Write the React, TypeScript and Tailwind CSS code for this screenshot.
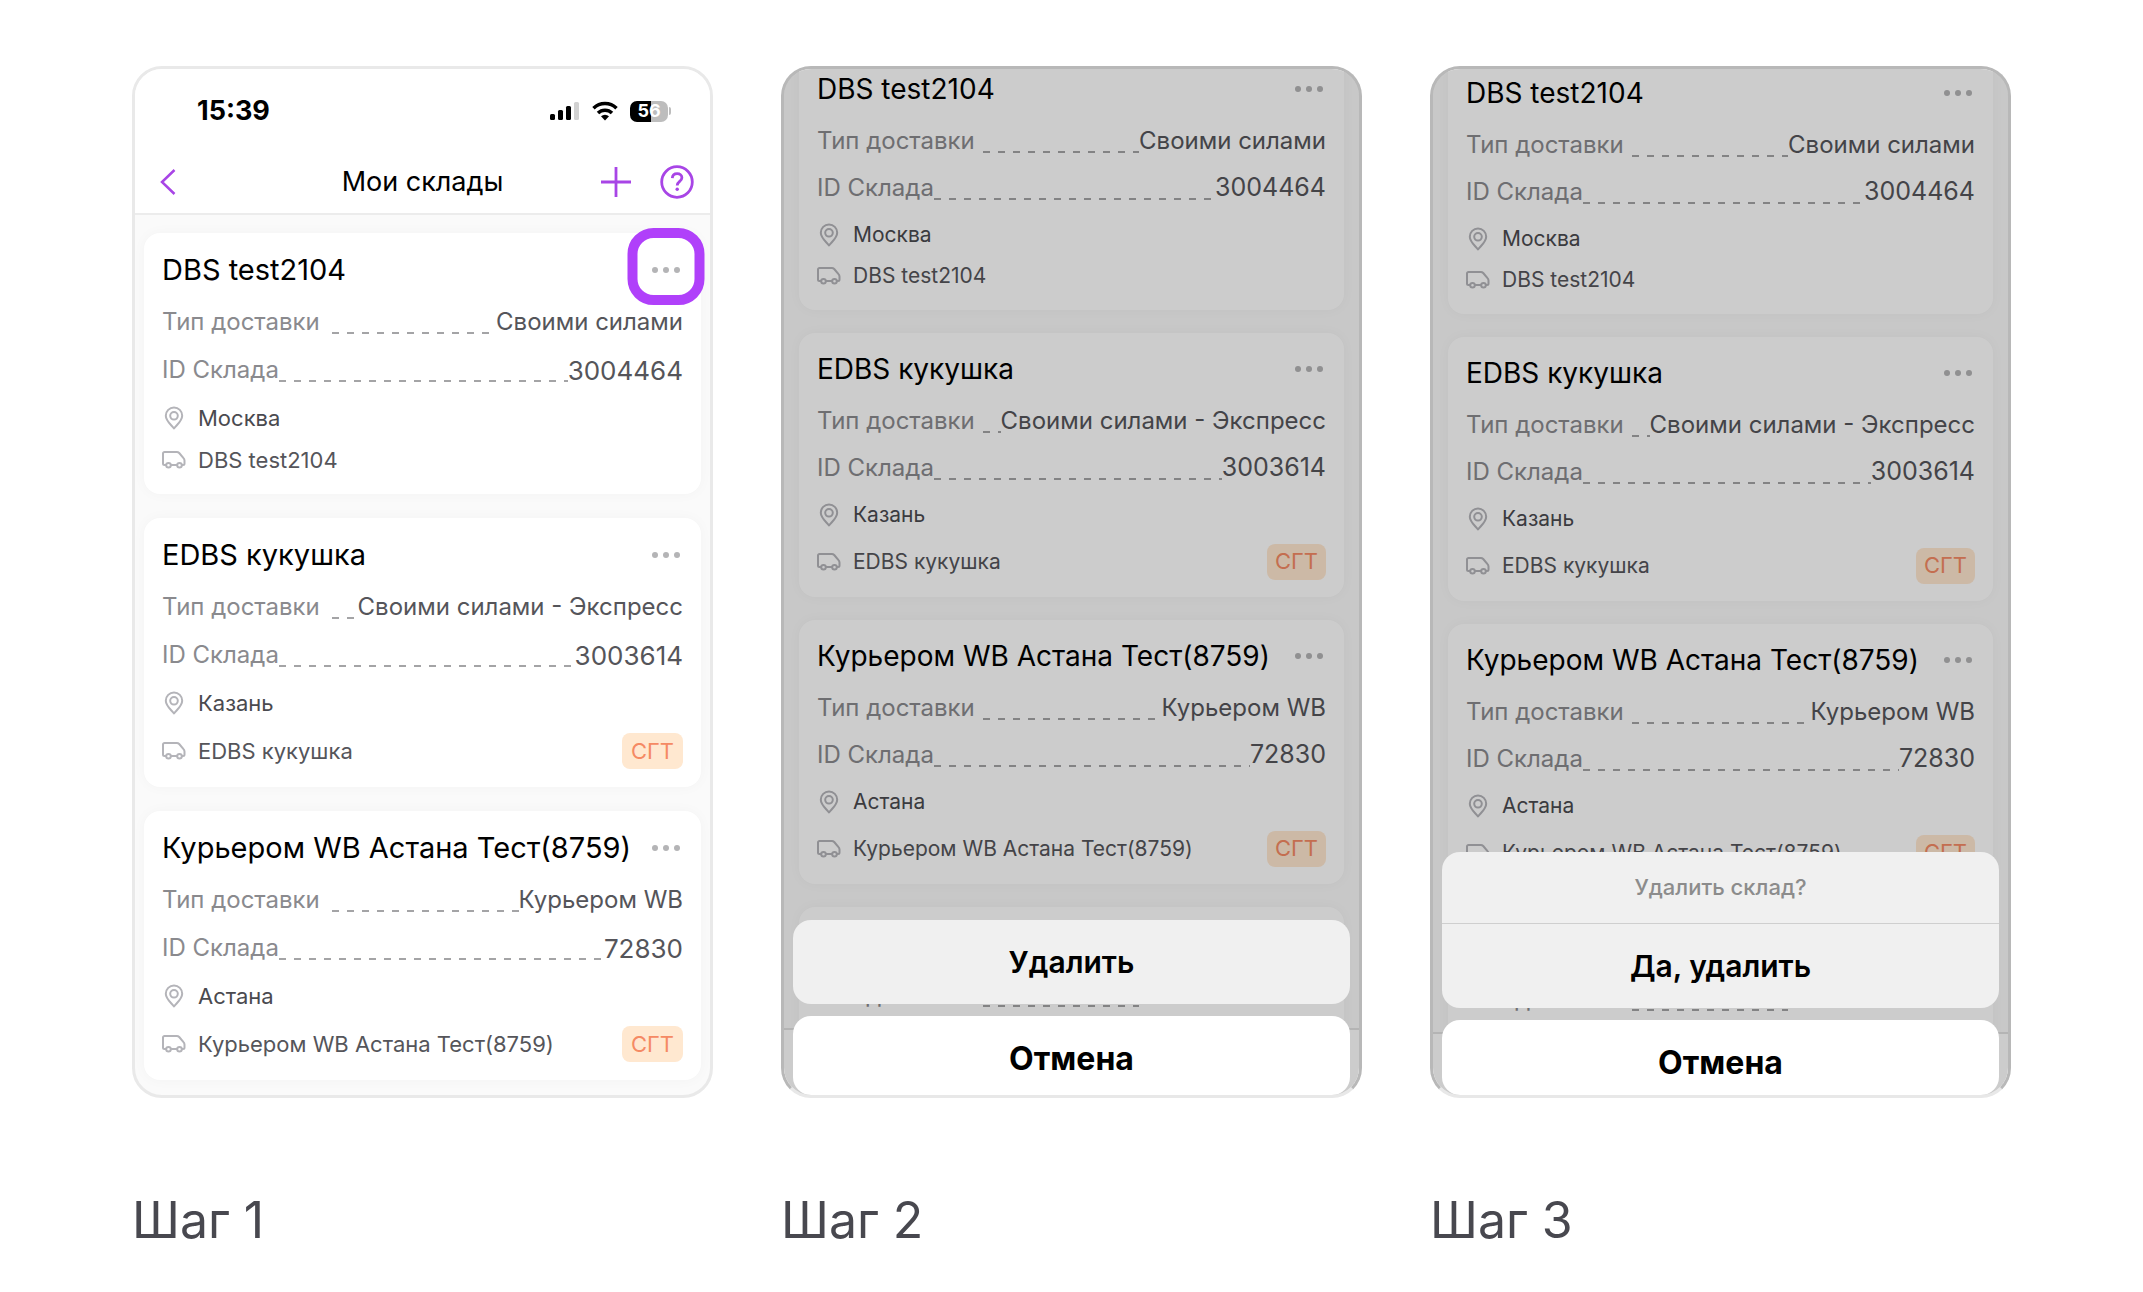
import React from 'react'

interface Warehouse {
	id: string
	name: string
	delivery: string
	city?: string
	oversized?: boolean
}

interface StepProps {
	title: string
	children: React.ReactNode
	dimmed?: boolean
	sheet?: React.ReactNode
}

const warehouses: Warehouse[] = [
	{ id: '3004464', name: 'DBS test2104', delivery: 'Своими силами', city: 'Москва' },
	{ id: '3003614', name: 'EDBS кукушка', delivery: 'Своими силами - Экспресс', city: 'Казань', oversized: true },
	{ id: '72830', name: 'Курьером WB Астана Тест(8759)', delivery: 'Курьером WB', city: 'Астана', oversized: true },
]

// Next card in the scrolled list, mostly hidden behind the action sheet
const nextWarehouse: Warehouse = { id: '3004465', name: 'DBS test', delivery: 'Своими силами' }

const PinIcon = () => (
	<svg viewBox="0 0 24 24" className="size-6 shrink-0" fill="none" stroke="#b4b4b9" strokeWidth="2" aria-hidden="true">
		<path d="M12 22.5C9 18.5 3.8 14.8 3.8 9.7a8.2 8.2 0 0 1 16.4 0c0 5.1-5.2 8.8-8.2 12.8Z" strokeLinejoin="round" />
		<circle cx="12" cy="9.8" r="3.8" />
	</svg>
)

const TruckIcon = () => (
	<svg viewBox="0 0 24 24" className="size-6 shrink-0" fill="none" stroke="#b4b4b9" strokeWidth="2" strokeLinejoin="round" aria-hidden="true">
		<path d="M4 17H2.500A1.500 1.500 0 0 1 1 15.500V5.500A1.500 1.500 0 0 1 2.500 4h12.300c1 0 1.700.3 2.400 1l4.100 4.900c.8.8 1.200 1.600 1.200 2.700V15.500c0 .9-.6 1.500-1.500 1.500H20M9 17h6" />
		<circle cx="6.500" cy="17.300" r="2.300" />
		<circle cx="17.500" cy="17.300" r="2.300" />
	</svg>
)

const StatusBar = () => (
	<div className="flex h-[84px] items-center justify-between pr-[39px] pl-[62px]">
		<span className="text-[27px] font-bold text-black">15:39</span>
		<div className="flex items-center gap-3">
			<svg viewBox="0 0 30 20" className="h-5 w-[30px]" aria-hidden="true">
				<rect x="0" y="13" width="5" height="6" rx="1.500" />
				<rect x="8" y="9" width="5" height="10" rx="1.500" />
				<rect x="16" y="5" width="5" height="14" rx="1.500" />
				<rect x="24" y="1" width="5" height="18" rx="1.500" fill="#d2d2d2" />
			</svg>
			<svg viewBox="0 0 26 20" className="h-5 w-[26px]" fill="none" stroke="#000" strokeWidth="3.500" aria-hidden="true">
				<path d="M1.500 7.200a16.500 16.500 0 0 1 23 0" />
				<path d="M6 12a10 10 0 0 1 14 0" />
				<path d="M13 19.500l-4-4.200a6 6 0 0 1 8 0Z" fill="#000" stroke="none" />
			</svg>
			<div className="flex items-center gap-px">
				<div className="flex h-[21px] w-[38px] items-center justify-center rounded-[7px] bg-linear-to-r from-black from-55% to-[#bdbdbd] to-55% text-[18px] leading-5 font-bold text-white">
					56
				</div>
				<div className="h-2 w-[2px] rounded-r-full bg-[#bdbdbd]" />
			</div>
		</div>
	</div>
)

const NavBar = () => (
	<header className="grid h-[62px] grid-cols-[1fr_auto_1fr] items-center border-b-2 border-[#ececec] px-4 pb-[2px]">
		<button type="button" aria-label="Назад" className="justify-self-start pl-2">
			<svg viewBox="0 0 18 28" className="h-7 w-[18px]" fill="none" stroke="#a845e6" strokeWidth="2.500" aria-hidden="true">
				<path d="M15.500 2 3 14l12.500 12" />
			</svg>
		</button>
		<h1 className="text-[27px] leading-8 text-black">Мои склады</h1>
		<div className="flex items-center gap-7 justify-self-end">
			<button type="button" aria-label="Добавить склад">
				<svg viewBox="0 0 32 32" className="size-8" fill="none" stroke="#a845e6" strokeWidth="2.800" aria-hidden="true">
					<path d="M16 1v30M1 16h30" />
				</svg>
			</button>
			<button type="button" aria-label="Помощь">
				<svg viewBox="0 0 34 34" className="size-[34px]" fill="none" stroke="#a845e6" strokeWidth="2.800" aria-hidden="true">
					<circle cx="17" cy="17" r="15.300" />
					<path d="M12.300 13.200c.2-2.900 2.200-4.500 4.900-4.500s4.700 1.700 4.700 4.100c0 3.500-4.700 3.700-4.700 7.700" />
					<circle cx="17.200" cy="24.200" r="1.700" fill="#a845e6" stroke="none" />
				</svg>
			</button>
		</div>
	</header>
)

const LeaderRow = ({ label, value, compact, numeric }: { label: string; value: string; compact?: boolean; numeric?: boolean }) => (
	<div className={`flex items-center text-[24px] ${compact ? 'h-[47px]' : 'h-12'}`}>
		<dt className="text-[#8a8a8e]">{label}</dt>
		<span
			className={`mt-[22px] h-[2px] flex-1 bg-[repeating-linear-gradient(90deg,#a4a4a6_0_7px,transparent_7px_15px)] ${
				numeric ? '' : compact ? 'ml-2' : 'ml-3'
			}`}
		/>
		<dd className={`text-[#55555a] ${numeric ? (compact ? 'text-[25px]' : 'text-[26px]') : ''}`}>{value}</dd>
	</div>
)

const WarehouseCard = ({ item, compact, highlighted }: { item: Warehouse; compact?: boolean; highlighted?: boolean }) => (
	<article
		className={`rounded-2xl bg-white px-[18px] shadow-[0_0_14px_rgba(0,0,0,0.03)] ${compact ? 'pt-3' : 'pt-[13px]'} ${
			item.oversized ? 'pb-3' : 'pb-4'
		}`}
	>
		<div className="mb-1 flex h-12 items-center justify-between">
			<h2 className={`whitespace-nowrap text-black ${compact ? 'text-[28px]' : 'text-[29px]'}`}>{item.name}</h2>
			<button type="button" aria-label="Действия со складом" className="relative flex gap-[5px] p-[3px]">
				<span className="size-[6px] rounded-full bg-[#b4b4b6]" />
				<span className="size-[6px] rounded-full bg-[#b4b4b6]" />
				<span className="size-[6px] rounded-full bg-[#b4b4b6]" />
				{highlighted && (
					<span className="absolute top-1/2 left-1/2 size-[77px] -translate-x-1/2 -translate-y-[42px] rounded-[26px] border-[10px] border-[#b040fa]" />
				)}
			</button>
		</div>
		<dl>
			<LeaderRow label="Тип доставки" value={item.delivery} compact={compact} />
			<LeaderRow label="ID Склада" value={item.id} compact={compact} numeric />
		</dl>
		{item.city && (
			<>
				<div className={`flex items-center gap-3 text-[#4a4a4f] ${compact ? 'h-[47px] text-[21px]' : 'h-12 text-[22px]'}`}>
					<PinIcon />
					{item.city}
				</div>
				<div
					className={`flex items-center gap-3 text-[#55555a] ${compact ? 'text-[21px]' : 'text-[22px]'} ${
						item.oversized ? (compact ? 'h-[47px]' : 'h-12') : 'h-9'
					}`}
				>
					<TruckIcon />
					<span className="flex-1 whitespace-nowrap">{item.name}</span>
					{item.oversized && (
						<span className={`flex h-9 items-center rounded-lg bg-[#ffe8d0] text-[22px] text-[#f58a64] ${compact ? 'px-2' : 'px-[9px]'}`}>
							СГТ
						</span>
					)}
				</div>
			</>
		)}
	</article>
)

const Step = ({ title, children, dimmed, sheet }: StepProps) => (
	<section>
		<div
			className={`relative aspect-[581/1032] overflow-hidden rounded-[30px] border-[3px] bg-[#fafafa] ${
				dimmed ? 'border-[#b8b8b8] border-b-[#e8e8e8]' : 'border-[#e9e9e9]'
			}`}
		>
			{children}
			{dimmed && <div className="absolute inset-0 bg-black/20" />}
			{sheet && <div className="absolute inset-x-[9px] bottom-0 flex flex-col">{sheet}</div>}
		</div>
		<p className="mt-[94px] text-[50px] leading-[56px] text-[#48484f]">{title}</p>
	</section>
)

const ScrolledList = ({ className = '' }: { className?: string }) => (
	<div className={`flex flex-col gap-[23px] px-[15px] ${className}`}>
		{[...warehouses, nextWarehouse].map((item) => (
			<WarehouseCard key={item.id} item={item} compact />
		))}
	</div>
)

const TabBarEdge = ({ className = '' }: { className?: string }) => (
	<div className={`absolute inset-x-0 bottom-0 border-t-2 border-[#e2e2e2] bg-white ${className}`} />
)

const App: React.FC = () => (
	<main className="grid grid-cols-3 gap-[68px] bg-white px-[132px] pt-[66px] pb-8 font-['Inter','Liberation_Sans',sans-serif]">
		<Step title="Шаг 1">
			<div className="bg-white">
				<StatusBar />
				<NavBar />
			</div>
			<div className="flex flex-col gap-6 px-[9px] pt-[18px]">
				{warehouses.map((item, index) => (
					<WarehouseCard key={item.id} item={item} highlighted={index === 0} />
				))}
			</div>
		</Step>

		<Step
			title="Шаг 2"
			dimmed
			sheet={
				<>
					<button type="button" className="h-[84px] rounded-[18px] bg-[#f0f0f0] text-[30px] font-semibold text-black">
						Удалить
					</button>
					<button type="button" className="mt-3 h-[79px] rounded-[18px] bg-white pt-[6px] text-[32px] font-bold text-black">
						Отмена
					</button>
				</>
			}
		>
			<ScrolledList className="-mt-4" />
			<TabBarEdge className="h-[67px]" />
		</Step>

		<Step
			title="Шаг 3"
			dimmed
			sheet={
				<>
					<div className="flex flex-col rounded-[18px] bg-[#f0f0f0]">
						<p className="flex h-[72px] items-center justify-center border-b border-[#cfcfcf] text-[22px] font-medium text-[#8c8c8c]">
							Удалить склад?
						</p>
						<button type="button" className="h-[84px] text-[30px] font-semibold text-black">
							Да, удалить
						</button>
					</div>
					<button type="button" className="mt-3 h-[75px] rounded-[18px] bg-white pt-[10px] text-[32px] font-bold text-black">
						Отмена
					</button>
				</>
			}
		>
			<ScrolledList className="-mt-3" />
			<TabBarEdge className="h-[63px]" />
		</Step>
	</main>
)

export default App
